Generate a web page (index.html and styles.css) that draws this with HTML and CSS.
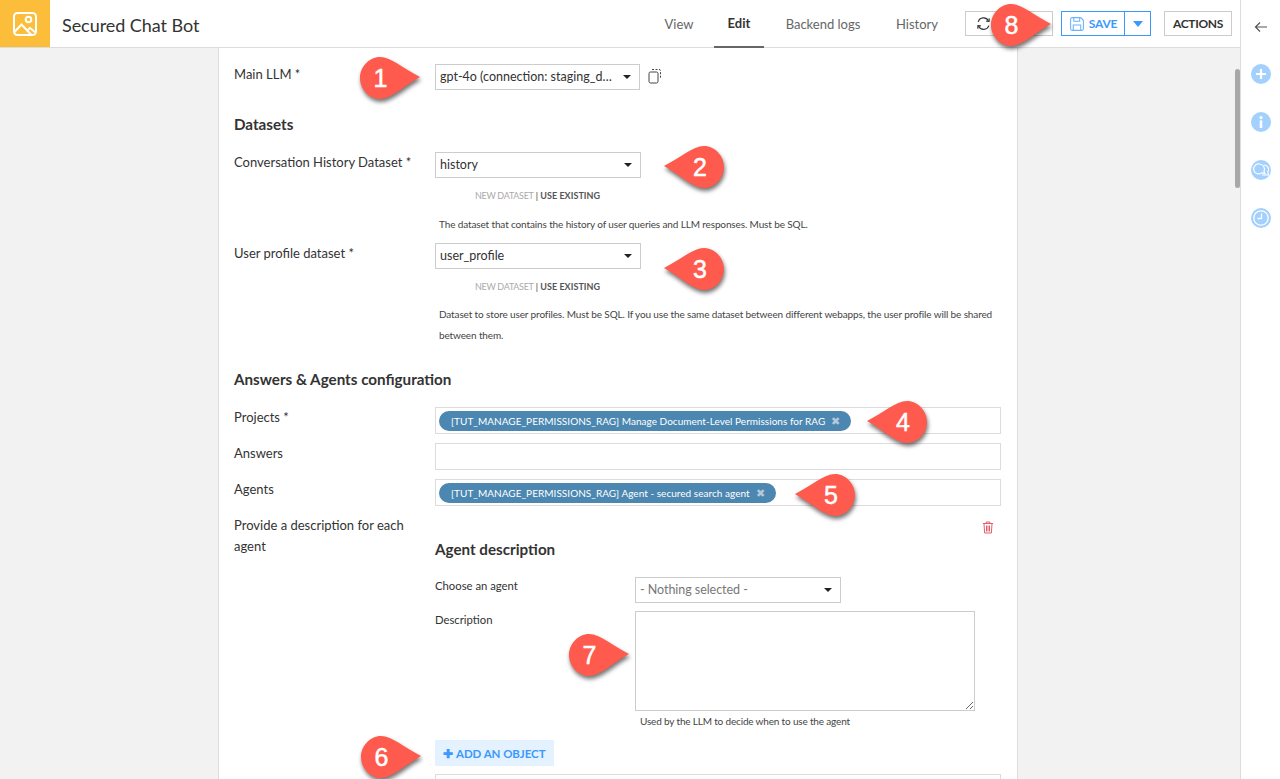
FILE: index.html
```html
<!DOCTYPE html>
<html lang="en">
<head>
<meta charset="utf-8">
<title>Secured Chat Bot</title>
<link rel="stylesheet" href="styles.css">
</head>
<body>
<div class="app">
  <header class="topbar">
    <div class="logo">
      <svg width="26" height="26" viewBox="0 0 26 26" fill="none" stroke="#fff" stroke-width="2"><rect x="2" y="2" width="22" height="22" rx="3.5"/><circle cx="16.5" cy="8.5" r="2.8"/><path d="M2.5 21 L9.5 13.5 L19 23.5"/><path d="M15 19.5 L18 17 L23.5 21.5"/></svg>
    </div>
    <h1 class="title">Secured Chat Bot</h1>
    <nav class="tabs">
      <a class="tab">View</a>
      <a class="tab tab-active">Edit</a>
      <a class="tab">Backend logs</a>
      <a class="tab">History</a>
    </nav>
    <div class="actions">
      <button class="btn btn-refresh">
        <svg width="17" height="17" viewBox="0 0 16 16" fill="none" stroke="#333" stroke-width="1.1"><path d="M3 6.5 A5.2 5.2 0 0 1 12.6 5.5"/><path d="M13 10 A5.2 5.2 0 0 1 3.4 10.5"/><path d="M10.5 5.8 L13.2 6 L13.4 3.2"/><path d="M5.5 10.2 L2.8 10 L2.6 12.8"/></svg>
      </button>
      <div class="save">
        <button class="save-main">
          <svg width="16" height="16" viewBox="0 0 15 15" fill="none" stroke="#6cb2fc" stroke-width="1"><path d="M1.5 3 A1.5 1.5 0 0 1 3 1.5 H11 L13.5 4 V12 A1.5 1.5 0 0 1 12 13.5 H3 A1.5 1.5 0 0 1 1.5 12 Z"/><path d="M4.5 1.5 V5 H10 V1.5"/><path d="M4 13.5 V8.5 H11 V13.5"/></svg>
          SAVE
        </button>
        <button class="save-caret"><span class="caret-blue"></span></button>
      </div>
      <button class="btn btn-actions">ACTIONS</button>
    </div>
  </header>

  <div class="body">
    <main class="workspace">
      <section class="card">
        <div class="row row-llm">
          <label class="label">Main LLM *</label>
          <div class="select select-llm"><span>gpt-4o (connection: staging_d…</span><i class="caret"></i></div>
          <svg class="copy" width="16" height="17" viewBox="0 0 16 17" fill="none" stroke="#444" stroke-width="1"><rect x="2" y="4" width="9" height="11" rx="1.5"/><path d="M5 1.5 H11.5 A1.5 1.5 0 0 1 13.5 3 V11" stroke-dasharray="2 1.5"/></svg>
        </div>

        <h2 class="section section-datasets">Datasets</h2>

        <div class="row row-history">
          <label class="label">Conversation History Dataset *</label>
          <div class="select select-wide"><span>history</span><i class="caret"></i></div>
        </div>
        <div class="switch"><span class="switch-off">NEW DATASET</span> | <b>USE EXISTING</b></div>
        <p class="help help-history">The dataset that contains the history of user queries and LLM responses. Must be SQL.</p>

        <div class="row row-profile">
          <label class="label">User profile dataset *</label>
          <div class="select select-wide"><span>user_profile</span><i class="caret"></i></div>
        </div>
        <div class="switch"><span class="switch-off">NEW DATASET</span> | <b>USE EXISTING</b></div>
        <p class="help help-profile">Dataset to store user profiles. Must be SQL. If you use the same dataset between different webapps, the user profile will be shared between them.</p>

        <h2 class="section section-answers">Answers &amp; Agents configuration</h2>

        <div class="row row-tags">
          <label class="label">Projects *</label>
          <div class="tagbox"><span class="tag">[TUT_MANAGE_PERMISSIONS_RAG] Manage Document-Level Permissions for RAG<i class="tag-x">✖</i></span></div>
        </div>
        <div class="row row-tags">
          <label class="label">Answers</label>
          <div class="tagbox"></div>
        </div>
        <div class="row row-tags">
          <label class="label">Agents</label>
          <div class="tagbox"><span class="tag">[TUT_MANAGE_PERMISSIONS_RAG] Agent - secured search agent<i class="tag-x">✖</i></span></div>
        </div>

        <div class="row row-objects">
          <label class="label label-wrap">Provide a description for each agent</label>
          <div class="objects">
            <svg class="trash" width="12" height="13" viewBox="0 0 12 13" fill="none" stroke="#e0606a" stroke-width="1"><path d="M1 2.5 H11"/><path d="M4.2 2.5 V1 H7.8 V2.5"/><path d="M2 2.5 L2.6 12 H9.4 L10 2.5"/><path d="M4.5 4.5 V10.5 M6 4.5 V10.5 M7.5 4.5 V10.5"/></svg>
            <h3 class="object-title">Agent description</h3>
            <div class="subrow subrow-agent">
              <label class="sublabel">Choose an agent</label>
              <div class="select select-agent"><span class="muted">- Nothing selected -</span><i class="caret"></i></div>
            </div>
            <div class="subrow subrow-desc">
              <label class="sublabel">Description</label>
              <div class="desc-col">
                <div class="textarea">
                  <svg class="grip" width="8" height="8" viewBox="0 0 8 8" stroke="#666" stroke-width="1"><path d="M1 8 L8 1 M5 8 L8 5"/></svg>
                </div>
                <p class="desc-help">Used by the LLM to decide when to use the agent</p>
              </div>
            </div>
            <button class="add-object"><span class="plus">✚</span> ADD AN OBJECT</button>
          </div>
        </div>
        <div class="row row-next">
          <div class="label"></div>
          <div class="tagbox"></div>
        </div>
      </section>
      <div class="scrollbar"></div>
    </main>
    <aside class="rail">
      <svg class="rail-back" width="14" height="12" viewBox="0 0 14 12" fill="none" stroke="#555" stroke-width="1.2"><path d="M13 6 H1.5 M6 1.5 L1.5 6 L6 10.5"/></svg>
      <span class="rail-dot"><svg width="20" height="20" viewBox="0 0 20 20" stroke="#fff" stroke-width="2.2"><path d="M10 5 V15 M5 10 H15"/></svg></span>
      <span class="rail-dot"><svg width="20" height="20" viewBox="0 0 20 20" fill="#fff"><circle cx="10" cy="5.6" r="1.6"/><rect x="8.7" y="8.4" width="2.6" height="7.6"/></svg></span>
      <span class="rail-dot"><svg width="20" height="20" viewBox="0 0 20 20" fill="none" stroke="#fff" stroke-width="1.2"><path d="M8.5 4 A5 5 0 0 1 13 11 L13.8 13.5 L11 12.6 A5 5 0 1 1 8.5 4 Z"/><path d="M13 5 A4.5 4.5 0 0 1 16.8 12 L17.4 15 H11"/></svg></span>
      <span class="rail-dot"><svg width="20" height="20" viewBox="0 0 20 20" fill="none" stroke="#fff" stroke-width="1.3"><circle cx="10" cy="10" r="7.2"/><path d="M10.5 5.5 V10.5 H6.5"/></svg></span>
    </aside>
  </div>

  <div class="pin pin-r pin-1">
    <svg class="drop" viewBox="0 0 60 44"><path d="M20 1 C31 1 44 13 60 21 C44 30 31 43 20 43 C9 43 0 33 0 22 C0 11 9 1 20 1 Z"/></svg><b>1</b>
  </div>
  <div class="pin pin-l pin-2">
    <svg class="drop" viewBox="0 0 60 44"><path d="M40 1 C29 1 16 13 0 21 C16 30 29 43 40 43 C51 43 60 33 60 22 C60 11 51 1 40 1 Z"/></svg><b>2</b>
  </div>
  <div class="pin pin-l pin-3">
    <svg class="drop" viewBox="0 0 60 44"><path d="M40 1 C29 1 16 13 0 21 C16 30 29 43 40 43 C51 43 60 33 60 22 C60 11 51 1 40 1 Z"/></svg><b>3</b>
  </div>
  <div class="pin pin-l pin-4">
    <svg class="drop" viewBox="0 0 60 44"><path d="M40 1 C29 1 16 13 0 21 C16 30 29 43 40 43 C51 43 60 33 60 22 C60 11 51 1 40 1 Z"/></svg><b>4</b>
  </div>
  <div class="pin pin-l pin-5">
    <svg class="drop" viewBox="0 0 60 44"><path d="M40 1 C29 1 16 13 0 21 C16 30 29 43 40 43 C51 43 60 33 60 22 C60 11 51 1 40 1 Z"/></svg><b>5</b>
  </div>
  <div class="pin pin-r pin-6">
    <svg class="drop" viewBox="0 0 60 44"><path d="M20 1 C31 1 44 13 60 21 C44 30 31 43 20 43 C9 43 0 33 0 22 C0 11 9 1 20 1 Z"/></svg><b>6</b>
  </div>
  <div class="pin pin-r pin-7">
    <svg class="drop" viewBox="0 0 60 44"><path d="M20 1 C31 1 44 13 60 21 C44 30 31 43 20 43 C9 43 0 33 0 22 C0 11 9 1 20 1 Z"/></svg><b>7</b>
  </div>
  <div class="pin pin-r pin-8">
    <svg class="drop" viewBox="0 0 60 44"><path d="M20 1 C31 1 44 13 60 21 C44 30 31 43 20 43 C9 43 0 33 0 22 C0 11 9 1 20 1 Z"/></svg><b>8</b>
  </div>
</div>
</body>
</html>
```
FILE: styles.css
```css
* { box-sizing: border-box; }
html, body { margin: 0; height: 100%; overflow: hidden; }
body { font-family: "Lato", "Noto Sans", sans-serif; font-size: 13px; color: #333; background: #fff; }
.app { position: relative; height: 779px; display: flex; flex-direction: column; overflow: hidden; }

.topbar { height: 48px; flex: none; display: flex; align-items: stretch; border-bottom: 1px solid #dcdcdc; background: #fff; }
.logo { width: 50px; height: 47px; background: #fcbe3a; display: flex; align-items: center; justify-content: center; }
.title { margin: 0 0 0 12px; font-size: 18px; line-height: 50px; font-weight: 400; color: #333; flex: 1; letter-spacing: -0.05px; }
.tabs { display: flex; margin-right: 13px; }
.tab { display: flex; align-items: center; justify-content: center; color: #666; font-size: 13px; height: 48px; }
.tab:nth-child(1) { width: 70px; }
.tab:nth-child(2) { width: 50px; }
.tab:nth-child(3) { width: 118px; }
.tab:nth-child(4) { width: 70px; }
.tab-active { color: #333; font-weight: 700; border-bottom: 2px solid #666; }
.actions { display: flex; align-items: center; padding-right: 48px; }
.btn { height: 25px; border: 1px solid #ccc; background: #fff; font: inherit; padding: 0; display: flex; align-items: center; }
.btn-refresh { width: 88px; padding-left: 9px; }
.btn-actions { width: 68px; margin-left: 13px; font-size: 12px; font-weight: 700; color: #333; justify-content: center; letter-spacing: -0.3px; }
.save { display: flex; height: 25px; margin-left: 8px; border: 1px solid #3b99fc; }
.save-main { width: 63px; border: 0; border-right: 1px solid #3b99fc; background: #fff; color: #3b99fc; font: inherit; font-size: 12px; font-weight: 700; display: flex; align-items: center; justify-content: center; gap: 4px; padding: 0; letter-spacing: -0.2px; }
.save-caret { width: 25px; border: 0; background: #fff; padding: 0; display: flex; align-items: center; justify-content: center; }
.caret-blue { width: 0; height: 0; border-left: 5px solid transparent; border-right: 5px solid transparent; border-top: 6px solid #3b99fc; }

.body { flex: 1; min-height: 0; display: flex; }
.workspace { position: relative; flex: 1; min-width: 0; background: #f2f2f2; display: flex; justify-content: center; padding-right: 4px; overflow: hidden; }
.scrollbar { position: absolute; top: 21px; right: 0; width: 5px; height: 119px; border-radius: 3px; background: #a8a8a8; }
.card { width: 800px; flex: none; background: #fff; border: solid #dcdcdc; border-width: 0 1px; padding: 16px 15px 0; display: flex; flex-direction: column; align-items: stretch; }

.row { display: flex; align-items: flex-start; }
.label { width: 201px; flex: none; line-height: 20px; color: #333; font-size: 13px; }
.select { height: 26px; border: 1px solid #ccc; background: #fff; display: flex; align-items: center; justify-content: space-between; padding: 0 8px 2px 4px; font-size: 12.5px; color: #333; white-space: nowrap; }
.select-llm { width: 205px; }
.select-wide { width: 206px; }
.select-agent { width: 206px; }
.muted { color: #777; letter-spacing: -0.05px; }
.caret { width: 0; height: 0; border-left: 4px solid transparent; border-right: 4px solid transparent; border-top: 4px solid #222; margin-top: 2px; }
.copy { margin: 4px 0 0 7px; }
.section { margin: 0; font-size: 15.2px; font-weight: 700; color: #333; line-height: 20px; }
.section-datasets { margin-top: 24px; }
.row-history { margin-top: 18px; }
.switch { margin: 12px 0 0 241px; font-size: 9px; line-height: 12px; color: #333; letter-spacing: -0.08px; }
.switch b { color: #555; letter-spacing: 0.05px; }
.switch-off { color: #aaa; letter-spacing: -0.3px; }
.help { margin: 0 0 0 205px; font-size: 10px; line-height: 21px; color: #444; letter-spacing: -0.13px; }
.help-history { margin-top: 12px; }
.help-profile { margin-top: 11px; }
.row-profile { margin-top: 8px; }
.section-answers { margin-top: 23px; }

.row-tags { margin-top: 9px; }
.section-answers + .row-tags { margin-top: 18px; }
.tagbox { width: 566px; flex: none; height: 27px; border: 1px solid #dcdcdc; background: #fff; padding: 3px; display: flex; align-items: center; }
.tag { height: 20px; border-radius: 10px; background: #4b87b0; color: #fff; font-size: 10px; padding: 0 11px 0 12px; display: inline-flex; align-items: center; white-space: nowrap; letter-spacing: 0.03px; }
.tag-x { font-style: normal; font-size: 11px; color: #b4c9d9; margin-left: 6px; }

.row-objects { margin-top: 8px; }
.label-wrap { width: 190px; margin-right: 11px; line-height: 21px; margin-top: 1px; }
.objects { position: relative; flex: 1; }
.trash { position: absolute; top: 7px; right: 8px; }
.object-title { margin: 15px 0 0; font-size: 15.2px; line-height: 20px; font-weight: 700; color: #333; padding-top: 10px; }
.subrow { display: flex; align-items: flex-start; }
.subrow-agent { margin-top: 18px; }
.subrow-desc { margin-top: 8px; }
.sublabel { width: 200px; flex: none; font-size: 11.3px; line-height: 18px; color: #333; }
.desc-col { display: flex; flex-direction: column; }
.textarea { position: relative; width: 340px; height: 100px; border: 1px solid #ccc; background: #fff; }
.grip { position: absolute; right: 1px; bottom: 1px; }
.desc-help { margin: 4px 0 0 5px; font-size: 10px; line-height: 12px; color: #444; letter-spacing: -0.17px; }
.add-object { display: flex; align-items: center; gap: 3px; height: 26px; width: 119px; margin-top: 13px; padding: 0 0 0 8px; border: 0; background: #e4f1fe; color: #3b99fc; font: inherit; font-size: 11.5px; font-weight: 700; white-space: nowrap; letter-spacing: -0.05px; }
.plus { font-size: 12px; }
.row-next { margin-top: 8px; }

.rail { width: 40px; flex: none; background: #fff; border-left: 1px solid #dcdcdc; margin-top: -48px; position: relative; z-index: 1; display: flex; flex-direction: column; align-items: center; padding-top: 21px; }
.rail-back { margin-bottom: 31px; }
.rail-dot { width: 20px; height: 20px; border-radius: 50%; background: #a3d0fd; margin-bottom: 28px; display: block; }
.rail-dot svg { display: block; }

.pin { position: absolute; width: 62px; height: 44px; display: flex; align-items: center; justify-content: center; }
.drop { position: absolute; inset: 0; width: 100%; height: 100%; fill: #fe5a4d; filter: drop-shadow(1px 3px 2px rgba(0,0,0,.55)); }
.pin b { position: relative; font-family: "Liberation Sans", Arial, sans-serif; font-size: 25px; font-weight: 400; color: #fff; line-height: 1; -webkit-text-stroke: 0.5px #fff; }
.pin-r b { margin-right: 19px; }
.pin-l b { margin-left: 12px; }
.pin-1 { left: 359px; top: 56px; }
.pin-2 { left: 663px; top: 145px; }
.pin-3 { left: 663px; top: 247px; }
.pin-4 { left: 866px; top: 400px; }
.pin-5 { left: 794px; top: 473px; }
.pin-6 { left: 360px; top: 735px; }
.pin-7 { left: 568px; top: 633px; }
.pin-8 { left: 990px; top: 3px; }
```
